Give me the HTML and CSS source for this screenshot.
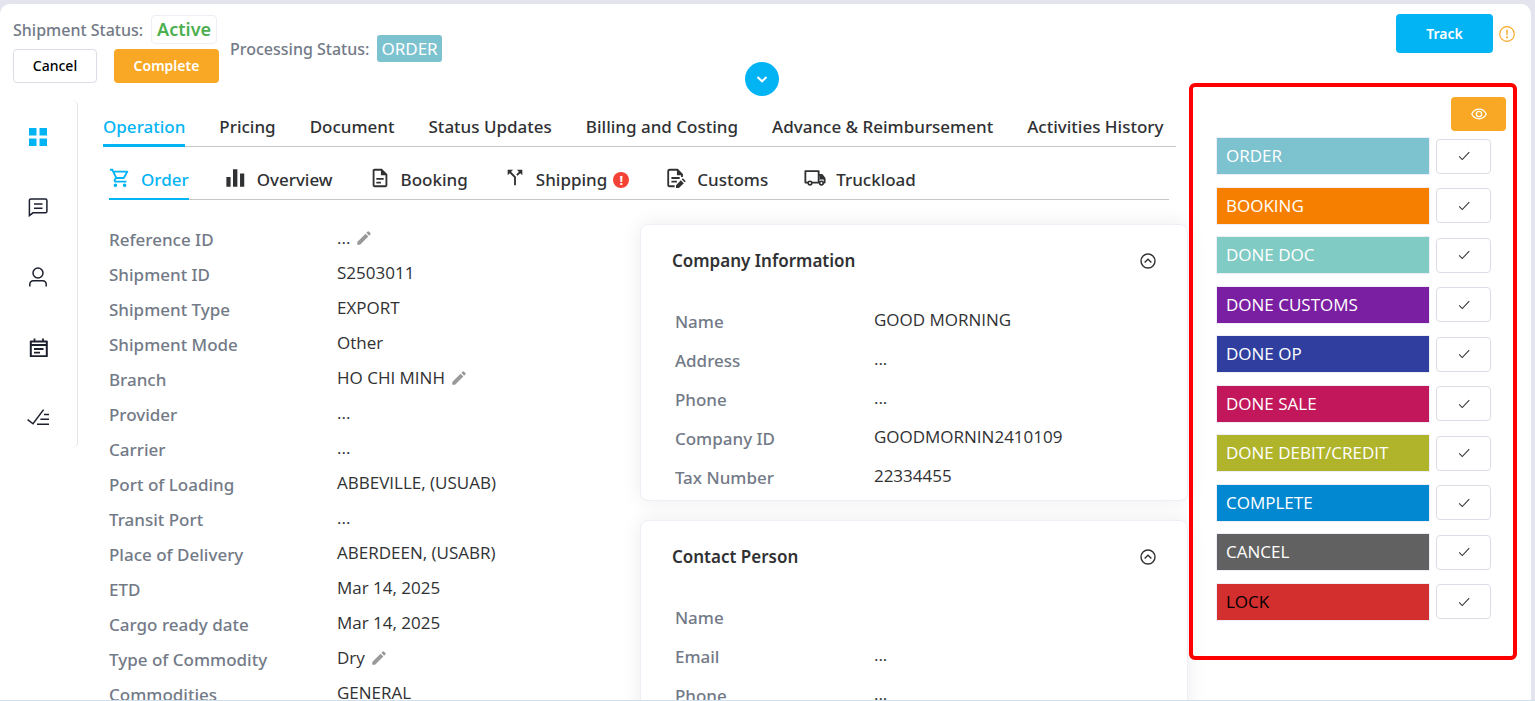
FILE: index.html
```html
<!DOCTYPE html>
<html dir="ltr" lang="en">
<head>
	<title>Shipment S2503011</title>
	<meta http-equiv="content-type" content="text/html; charset=utf-8" />
	<meta name="viewport" content="width=device-width, initial-scale=1.0">
	<link rel="stylesheet" href="styles.css">
</head>
<body>
	<!-- shared icons -->
	<svg class="sprite" aria-hidden="true">
		<symbol id="check" viewBox="0 0 16 16"><path d="M2.5 8.5L6 12L14 3.5" fill="none" stroke="currentColor" stroke-width="1.2"/></symbol>
		<symbol id="pencil" viewBox="0 0 24 24"><path d="M3 17.25V21h3.75L17.81 9.94l-3.75-3.75L3 17.25zM20.71 7.04a1 1 0 0 0 0-1.41l-2.34-2.34a1 1 0 0 0-1.41 0l-1.83 1.83 3.75 3.75 1.83-1.83z" fill="currentColor"/></symbol>
		<symbol id="collapse" viewBox="0 0 16 16"><circle cx="8" cy="8" r="7" fill="none" stroke="currentColor" stroke-width="1.4"/><path d="M4.6 9.4L8 6.2l3.4 3.2" fill="none" stroke="currentColor" stroke-width="1.4"/></symbol>
	</svg>

	<div class="page">
		<header class="header">
			<div class="status">
				<p class="status-line">Shipment Status: <span class="active">Active</span></p>
				<div class="actions">
					<button type="button" class="btn btn-plain">Cancel</button>
					<button type="button" class="btn btn-warn">Complete</button>
				</div>
			</div>
			<p class="status-line">Processing Status: <span class="tag">ORDER</span></p>
			<div class="track">
				<button type="button" class="btn btn-track">Track</button>
				<svg class="warn-icon" viewBox="0 0 16 16"><circle cx="8" cy="8" r="7.3" fill="none" stroke="currentColor" stroke-width="1.2"/><path d="M7.2 3.8h1.6l-.2 5.4H7.4zM7.1 10.6h1.8v1.6H7.1z" fill="currentColor"/></svg>
			</div>
			<button type="button" class="expand" aria-label="Expand"><svg viewBox="0 0 12 12"><path d="M1.5 4L6 8.3L10.5 4" fill="none" stroke="currentColor" stroke-width="2"/></svg></button>
		</header>

		<div class="body">
			<nav class="rail">
				<a href="#" class="on" aria-label="Dashboard"><svg viewBox="0 0 18 18"><path d="M0 0h7.500v7.500H0zM10.500 0H18v7.500h-7.500zM0 10.500h7.500V18H0zM10.500 10.500H18V18h-7.500z" fill="currentColor"/></svg></a>
				<a href="#" aria-label="Messages"><svg viewBox="0 0 20 20"><path d="M3 2h14.5a1.4 1.4 0 0 1 1.4 1.4v11a1.4 1.4 0 0 1-1.4 1.4H5L1.400 18.600V3.400A1.400 1.400 0 0 1 3 2zM6 7h8.500M6 11.200h8.500" fill="none" stroke="currentColor" stroke-width="1.5"/></svg></a>
				<a href="#" aria-label="Contacts"><svg viewBox="0 0 20 20"><circle cx="10" cy="6" r="5" fill="none" stroke="currentColor" stroke-width="1.5"/><path d="M1.8 19.6v-2.4a3.4 3.4 0 0 1 3.4-3.4h9.6a3.4 3.4 0 0 1 3.4 3.4v2.4" fill="none" stroke="currentColor" stroke-width="1.5"/></svg></a>
				<a href="#" aria-label="Notes"><svg viewBox="0 0 20 20"><path d="M2.800 4.500h16v14.800h-16zM2.800 8h16" fill="none" stroke="currentColor" stroke-width="2" stroke-linejoin="round"/><path d="M6.500 1.500v3M15 1.500v3M6 12h9.500M6 15.600H12" fill="none" stroke="currentColor" stroke-width="1.8"/></svg></a>
				<a href="#" aria-label="Tasks"><svg class="wide" viewBox="0 0 22 20"><path d="M.6 12.6L6 16.8L16.6 2.6M17 7.6h5M13.4 12.2H22M10 17.2h12" fill="none" stroke="currentColor" stroke-width="1.5"/></svg></a>
			</nav>

			<main class="content">
				<nav class="tabs">
					<a href="#" class="on">Operation</a>
					<a href="#">Pricing</a>
					<a href="#">Document</a>
					<a href="#">Status Updates</a>
					<a href="#">Billing and Costing</a>
					<a href="#">Advance &amp; Reimbursement</a>
					<a href="#">Activities History</a>
				</nav>

				<nav class="tabs subtabs">
					<a href="#" class="on"><svg viewBox="0 0 24 24"><path d="M15.55 13c.75 0 1.41-.41 1.75-1.03l3.58-6.49A.996.996 0 0 0 20.01 4H5.21l-.94-2H1v2h2l3.6 7.59-1.35 2.44C4.52 15.37 5.48 17 7 17h12v-2H7l1.1-2h7.45zM6.16 6h12.15l-2.76 5H8.53L6.16 6zM7 18a2 2 0 1 0 0 4 2 2 0 0 0 0-4zm10 0a2 2 0 1 0 0 4 2 2 0 0 0 0-4z" fill="currentColor"/></svg>Order</a>
					<a href="#"><svg viewBox="0 0 24 24"><path d="M1.500 11h4.600v10.500H1.500zM8.700 2.500h4.800v19H8.700zM16.400 7H21v14.500h-4.600z" fill="currentColor"/></svg>Overview</a>
					<a href="#"><svg viewBox="0 0 24 24"><path d="M8 16h5v2H8zm0-4h8v2H8zm6-10H6c-1.100 0-2 .9-2 2v16c0 1.100.89 2 1.990 2H18c1.100 0 2-.9 2-2V8l-6-6zm4 18H6V4h7v5h5v11z" fill="currentColor"/></svg>Booking</a>
					<a href="#"><svg viewBox="0 0 24 24"><path d="M14 3l2.290 2.290-2.880 2.880 1.420 1.420 2.880-2.880L20 9V3zM10 3H4v6l2.290-2.290 4.710 4.700V20h2v-9.410l-5.290-5.300z" fill="currentColor"/></svg>Shipping<span class="alert">!</span></a>
					<a href="#"><svg viewBox="0 0 24 24"><path d="M10.500 21H5a1.500 1.500 0 0 1-1.500-1.500v-15A1.500 1.500 0 0 1 5 3h8.500l5 5v3" fill="none" stroke="currentColor" stroke-width="2"/><path d="M13 2l7 7h-7zM7 11h9v2H7zM7 15h6v2H7zM12 19.800V23h3.200l5.300-5.300-3.200-3.200zM18.300 13.500l3.200 3.200 1.200-1.200-3.200-3.200z" fill="currentColor"/></svg>Customs</a>
					<a href="#"><svg viewBox="0 0 24 24"><path d="M4.500 17H1.500V4.500H16V17H8.500M16 8.500h3.500l3 4V17h-1.500M16 17h1" fill="none" stroke="currentColor" stroke-width="2" stroke-linejoin="round"/><circle cx="6.500" cy="17.500" r="2" fill="none" stroke="currentColor" stroke-width="1.800"/><circle cx="19" cy="17.500" r="2" fill="none" stroke="currentColor" stroke-width="1.800"/><path d="M17 9h3l2.500 4.500H17z" fill="currentColor"/></svg>Truckload</a>
				</nav>

				<div class="cols">
					<dl class="details">
						<div><dt>Reference ID</dt><dd>... <button type="button" class="edit" aria-label="Edit reference"><svg><use href="#pencil"/></svg></button></dd></div>
						<div><dt>Shipment ID</dt><dd>S2503011</dd></div>
						<div><dt>Shipment Type</dt><dd>EXPORT</dd></div>
						<div><dt>Shipment Mode</dt><dd>Other</dd></div>
						<div><dt>Branch</dt><dd>HO CHI MINH <button type="button" class="edit" aria-label="Edit branch"><svg><use href="#pencil"/></svg></button></dd></div>
						<div><dt>Provider</dt><dd>...</dd></div>
						<div><dt>Carrier</dt><dd>...</dd></div>
						<div><dt>Port of Loading</dt><dd>ABBEVILLE, (USUAB)</dd></div>
						<div><dt>Transit Port</dt><dd>...</dd></div>
						<div><dt>Place of Delivery</dt><dd>ABERDEEN, (USABR)</dd></div>
						<div><dt>ETD</dt><dd>Mar 14, 2025</dd></div>
						<div><dt>Cargo ready date</dt><dd>Mar 14, 2025</dd></div>
						<div><dt>Type of Commodity</dt><dd>Dry <button type="button" class="edit" aria-label="Edit commodity type"><svg><use href="#pencil"/></svg></button></dd></div>
						<div><dt>Commodities</dt><dd>GENERAL</dd></div>
					</dl>

					<div class="cards">
						<section class="card">
							<h2>Company Information <button type="button" aria-label="Collapse"><svg><use href="#collapse"/></svg></button></h2>
							<dl class="details">
								<div><dt>Name</dt><dd>GOOD MORNING</dd></div>
								<div><dt>Address</dt><dd>...</dd></div>
								<div><dt>Phone</dt><dd>...</dd></div>
								<div><dt>Company ID</dt><dd>GOODMORNIN2410109</dd></div>
								<div><dt>Tax Number</dt><dd>22334455</dd></div>
							</dl>
						</section>
						<section class="card">
							<h2>Contact Person <button type="button" aria-label="Collapse"><svg><use href="#collapse"/></svg></button></h2>
							<dl class="details">
								<div><dt>Name</dt><dd></dd></div>
								<div><dt>Email</dt><dd>...</dd></div>
								<div><dt>Phone</dt><dd>...</dd></div>
							</dl>
						</section>
					</div>
				</div>
			</main>

			<aside class="panel">
				<button type="button" class="btn btn-warn btn-eye" aria-label="Show"><svg viewBox="0 0 16 12"><path d="M.7 6C2.400 2.700 5 1.200 8 1.200S13.600 2.700 15.300 6C13.600 9.300 11 10.800 8 10.800S2.400 9.300.7 6z" fill="none" stroke="currentColor" stroke-width="1.300"/><circle cx="8" cy="6" r="2.700" fill="none" stroke="currentColor" stroke-width="1.300"/></svg></button>
				<ul class="steps">
					<li><span class="step order">ORDER</span><button type="button" aria-label="Set order"><svg><use href="#check"/></svg></button></li>
					<li><span class="step booking">BOOKING</span><button type="button" aria-label="Set booking"><svg><use href="#check"/></svg></button></li>
					<li><span class="step doc">DONE DOC</span><button type="button" aria-label="Set done doc"><svg><use href="#check"/></svg></button></li>
					<li><span class="step customs">DONE CUSTOMS</span><button type="button" aria-label="Set done customs"><svg><use href="#check"/></svg></button></li>
					<li><span class="step op">DONE OP</span><button type="button" aria-label="Set done op"><svg><use href="#check"/></svg></button></li>
					<li><span class="step sale">DONE SALE</span><button type="button" aria-label="Set done sale"><svg><use href="#check"/></svg></button></li>
					<li><span class="step debit">DONE DEBIT/CREDIT</span><button type="button" aria-label="Set done debit/credit"><svg><use href="#check"/></svg></button></li>
					<li><span class="step complete">COMPLETE</span><button type="button" aria-label="Set complete"><svg><use href="#check"/></svg></button></li>
					<li><span class="step cancel">CANCEL</span><button type="button" aria-label="Set cancel"><svg><use href="#check"/></svg></button></li>
					<li><span class="step lock">LOCK</span><button type="button" aria-label="Set lock"><svg><use href="#check"/></svg></button></li>
				</ul>
			</aside>
		</div>
	</div>
</body>
</html>
```
FILE: styles.css
```css
	* { box-sizing: border-box; }
	body { margin: 0; height: 100vh; padding: 4px 4px 0 0; overflow: hidden; background-color: #e4e4ef; border-bottom: 1px solid #cfe0ec; color: #303133; font: 17px/24px "Noto Sans", "Open Sans", sans-serif; }
	p, dl, dd, ul, h2 { margin: 0; padding: 0; }
	a { color: inherit; text-decoration: none; }
	button { font: inherit; color: inherit; background: none; border: 0; padding: 0; cursor: pointer; }
	svg { display: block; }
	.sprite { display: none; }
	.page { height: 100%; overflow: hidden; background-color: #fff; border-radius: 10px 10px 0 0; }

	/* top bar */
	.header { position: relative; display: flex; align-items: flex-start; height: 79px; margin-right: 7px; padding: 11px 9px 0 13px; }
	.status-line { display: flex; align-items: center; gap: 8px; color: #737a87; font-size: 16px; font-weight: 500; }
	.header > .status-line { margin: 20px 0 0 11px; }
	.active { padding: 0 5px; border: 1px solid #eeeef6; border-radius: 4px; color: #4caf50; font-size: 18px; line-height: 27px; font-weight: 600; }
	.tag { padding: 0 4px; border-radius: 3px; background-color: #7cc2cf; color: #fff; font-size: 17px; font-weight: 400; line-height: 27px; }
	.actions { display: flex; gap: 17px; margin-top: 5px; }
	.btn { border-radius: 4px; font-size: 14px; font-weight: 600; color: #fff; }
	.btn-plain { width: 84px; height: 34px; border: 1px solid #dcdce6; color: #000; font-weight: 500; }
	.btn-warn { width: 105px; height: 34px; background-color: #f9a825; }
	.track { display: flex; align-items: center; gap: 6px; margin: -1px 0 0 auto; }
	.btn-track { width: 97px; height: 39px; background-color: #03b4f5; }
	.warn-icon { width: 16px; height: 16px; color: #f9a825; }
	.expand { position: absolute; left: 50%; bottom: -13px; display: grid; place-items: center; width: 34px; height: 34px; margin-left: -17px; border-radius: 50%; background-color: #03b4f5; color: #fff; }
	.expand svg { width: 12px; height: 12px; }

	.body { display: flex; align-items: flex-start; padding-right: 14px; }

	/* icon rail */
	.rail { display: flex; flex-direction: column; flex: none; gap: 50px; width: 78px; margin-top: 17px; padding: 27px 0 21px; border-right: 1px solid #e4e4e4; border-radius: 0 6px 6px 0; }
	.rail a { display: grid; place-items: center; height: 20px; padding-right: 2px; color: #1c1f2e; }
	.rail .on { color: #03b4f5; }
	.rail svg { width: 20px; height: 20px; }
	.rail .on svg { width: 18px; height: 18px; }
	.rail .wide { width: 22px; }

	/* tabs */
	.content { flex: 1; min-width: 0; padding: 26px 1px 0 25px; }
	.tabs { display: flex; gap: 34px; margin-right: 12px; border-bottom: 1px solid #c6c6c6; font-weight: 500; white-space: nowrap; }
	.tabs a { display: flex; align-items: center; height: 38px; margin-bottom: -1px; border-bottom: 3px solid transparent; }
	.tabs .on { color: #03b4f5; border-color: #03b4f5; }
	.subtabs { gap: 36px; margin: 15px 19px 0 6px; }
	.subtabs a { border-bottom-width: 2px; }
	.subtabs svg { width: 22px; height: 22px; margin: 0 10px 4px 0; }
	.alert { width: 16px; height: 16px; margin-left: 6px; border-radius: 50%; background-color: #f44336; color: #fff; font-size: 13px; line-height: 16px; font-weight: 700; text-align: center; }

	/* shipment data */
	.cols { display: grid; grid-template-columns: 31fr 32fr; padding: 22px 0 0 6px; }
	.details > div { display: flex; align-items: center; height: 35px; }
	.details dt { flex: none; width: 228px; color: #737a87; font-weight: 500; }
	.details dd { display: flex; align-items: center; gap: 5px; padding-bottom: 3px; font-family: "Open Sans", "Noto Sans", sans-serif; }
	.edit svg { width: 18px; height: 18px; color: #999; }
	.cards { display: grid; gap: 19px; margin-top: 2px; }
	.card { padding: 0 31px 3px; border: 1px solid #eeeef6; border-radius: 8px; background-color: #fff; box-shadow: 0 0 20px rgba(0, 0, 0, .08); }
	.card h2 { display: flex; align-items: center; justify-content: space-between; height: 71px; font-size: 17px; font-weight: 600; }
	.card h2 svg { width: 16px; height: 16px; }
	.card .details { padding: 6px 3px 0; }
	.card .details > div { height: 39px; }
	.card .details dt { width: 199px; }

	/* processing steps */
	.panel { display: flex; flex-direction: column; flex: none; width: 328px; min-height: 577px; padding: 10px 7px 35px 23px; border: 4px solid #f00; border-radius: 6px; }
	.btn-eye { display: grid; place-items: center; align-self: flex-end; width: 55px; }
	.btn-eye svg { width: 16px; height: 12px; }
	.steps { display: flex; flex: 1; flex-direction: column; justify-content: space-between; padding: 6px 15px 0 0; list-style: none; }
	.steps li { display: flex; align-items: center; gap: 6px; }
	.step { flex: 1; padding: 0 9px; border: 1px solid #eeeef6; color: #fff; font-family: "Open Sans", "Noto Sans", sans-serif; line-height: 36px; }
	.steps button { display: grid; place-items: center; width: 55px; height: 35px; border: 1px solid #dcdce6; border-radius: 4px; }
	.steps svg { width: 14px; height: 14px; }
	.order { background-color: #7cc2cf; }
	.booking { background-color: #f77f00; }
	.doc { background-color: #80cbc4; }
	.customs { background-color: #7b1fa2; }
	.op { background-color: #303f9f; }
	.sale { background-color: #c2185b; }
	.debit { background-color: #afb42b; }
	.complete { background-color: #0288d1; }
	.cancel { background-color: #616161; }
	.lock { background-color: #d32f2f; color: #000; }
```
